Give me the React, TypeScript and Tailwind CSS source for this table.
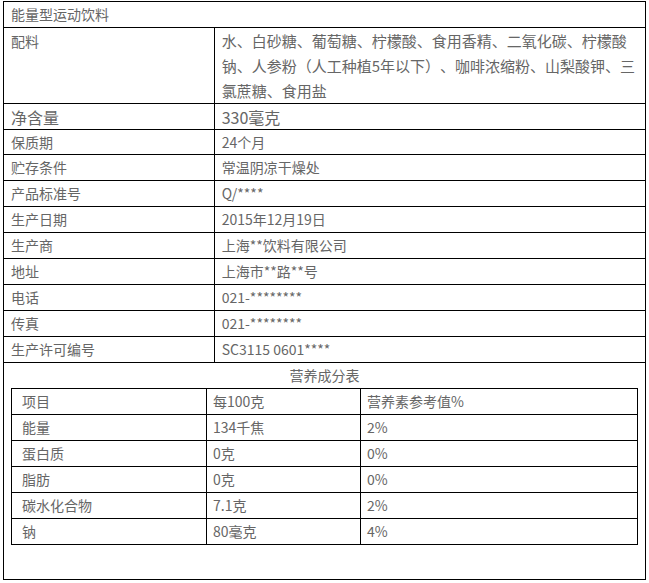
import React from 'react';

const font = { fontFamily: '"Noto Sans CJK SC", "Noto Sans", sans-serif' };

const rows: { label: string; value: string; big?: boolean; h: string }[] = [
    { label: '净含量', value: '330毫克', big: true, h: 'h-[26px]' },
    { label: '保质期', value: '24个月', h: 'h-[25px]' },
    { label: '贮存条件', value: '常温阴凉干燥处', h: 'h-[26px]' },
    { label: '产品标准号', value: 'Q/****', h: 'h-[26px]' },
    { label: '生产日期', value: '2015年12月19日', h: 'h-[26px]' },
    { label: '生产商', value: '上海**饮料有限公司', h: 'h-[26px]' },
    { label: '地址', value: '上海市**路**号', h: 'h-[26px]' },
    { label: '电话', value: '021-********', h: 'h-[26px]' },
    { label: '传真', value: '021-********', h: 'h-[26px]' },
    { label: '生产许可编号', value: 'SC3115 0601****', h: 'h-[26px]' },
];

const nutrition = [
    ['项目', '每100克', '营养素参考值%'],
    ['能量', '134千焦', '2%'],
    ['蛋白质', '0克', '0%'],
    ['脂肪', '0克', '0%'],
    ['碳水化合物', '7.1克', '2%'],
    ['钠', '80毫克', '4%'],
];

export default function App() {
    return (
        <div className="w-[649px] h-[583px] bg-white pt-[1px] pl-[3px] text-[#666] text-[14px]" style={font}>
            <div className="w-[643px] border-t border-l border-black">
                {/* title */}
                <div className="h-[26px] border-r border-b border-black flex items-center pl-[7px]">能量型运动饮料</div>

                {/* ingredients */}
                <div className="flex">
                    <div className="w-[211px] h-[76px] border-r border-b border-black pl-[7px] pt-[1px] leading-[25px]">配料</div>
                    <div className="w-[432px] h-[76px] border-r border-b border-black pl-[7px] leading-[25px] text-[15px] overflow-hidden [text-spacing-trim:space-all]">
                        <div className="whitespace-nowrap">水、白砂糖、葡萄糖、柠檬酸、食用香精、二氧化碳、柠檬酸</div>
                        <div className="whitespace-nowrap">钠、人参粉（人工种植5年以下）、咖啡浓缩粉、山梨酸钾、三</div>
                        <div className="whitespace-nowrap">氯蔗糖、食用盐</div>
                    </div>
                </div>

                {rows.map(r => (
                    <div key={r.label} className={`flex ${r.h}`}>
                        <div className={`w-[211px] border-r border-b border-black flex items-center pl-[7px] ${r.big ? 'text-[16px]' : ''}`}>{r.label}</div>
                        <div className={`w-[432px] border-r border-b border-black flex items-center pl-[7px] ${r.big ? 'text-[16px]' : ''}`}>{r.value}</div>
                    </div>
                ))}

                {/* nutrition facts */}
                <div className="h-[217px] border-r border-b border-black">
                    <div className="h-[25px] flex items-center justify-center">营养成分表</div>
                    <div className="ml-[7px] w-[627px] border-t border-l border-black">
                        {nutrition.map(n => (
                            <div key={n[0]} className="flex h-[26px]">
                                <div className="w-[195px] border-r border-b border-black flex items-center pl-[10px]">{n[0]}</div>
                                <div className="w-[154px] border-r border-b border-black flex items-center pl-[6px]">{n[1]}</div>
                                <div className="w-[277px] border-r border-b border-black flex items-center pl-[6px]">{n[2]}</div>
                            </div>
                        ))}
                    </div>
                </div>
            </div>
        </div>
    );
}
